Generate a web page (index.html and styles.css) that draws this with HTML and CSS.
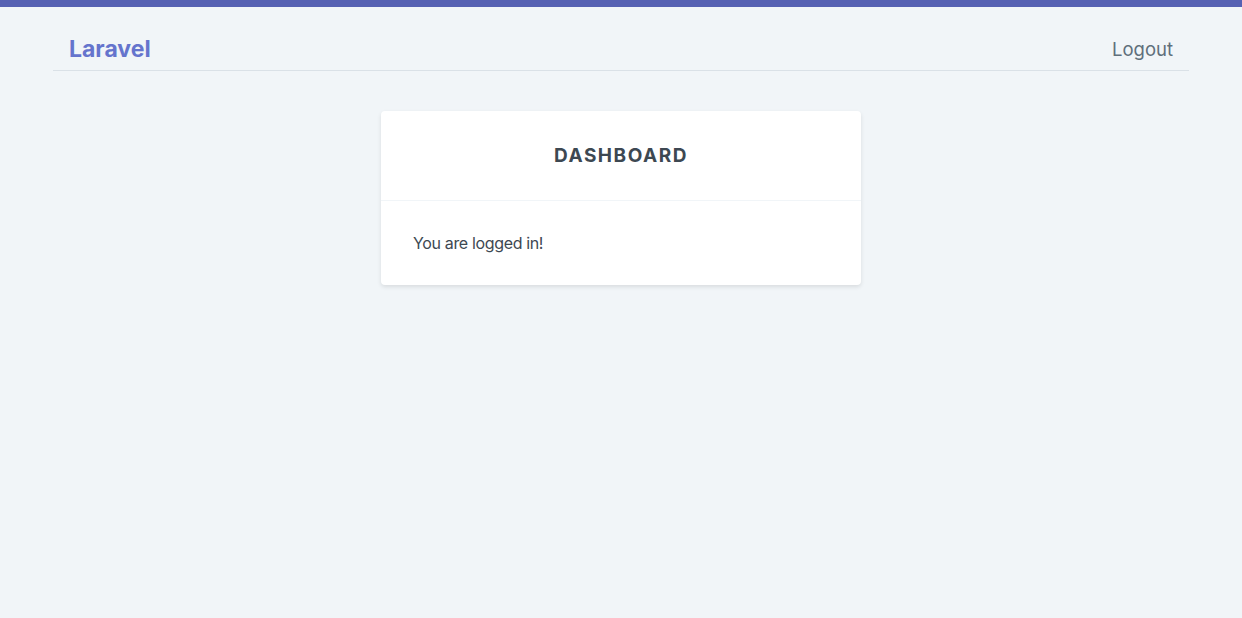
FILE: index.html
```html
<!DOCTYPE html>
<html lang="en">
<head>
<meta charset="utf-8">
<title>Laravel</title>
<link rel="stylesheet" href="styles.css">
</head>
<body>
<div class="topbar"></div>
<div class="container">
  <nav class="nav">
    <a class="brand" href="#">Laravel</a>
    <a class="logout" href="#">Logout</a>
  </nav>
  <main class="main">
    <div class="card">
      <div class="card-header">Dashboard</div>
      <div class="card-body">You are logged in!</div>
    </div>
  </main>
</div>
</body>
</html>
```
FILE: styles.css
```css
* { box-sizing: border-box; }
html, body { margin: 0; padding: 0; }
body {
  background: #f1f5f8;
  font-family: Inter, "Noto Sans", "Liberation Sans", sans-serif;
  color: #3d4852;
  min-height: 618px;
}
.topbar {
  height: 7px;
  background: #5661b3;
}
.container {
  width: 1136px;
  margin: 0 auto;
}
.nav {
  display: flex;
  justify-content: space-between;
  align-items: center;
  padding: 28px 16px 7px;
  border-bottom: 1px solid #dae1e7;
}
.brand {
  font-size: 23px;
  line-height: 28px;
  font-weight: 700;
  color: #6574cd;
  text-decoration: none;
}
.logout {
  font-size: 18.5px;
  line-height: 28px;
  color: #606f7b;
  text-decoration: none;
}
.main {
  display: flex;
  justify-content: center;
  padding-top: 40px;
}
.card {
  width: 480px;
  background: #fff;
  border-radius: 4px;
  box-shadow: 0 2px 4px 0 rgba(0,0,0,0.10);
}
.card-header {
  padding: 32px;
  text-align: center;
  font-size: 19px;
  line-height: 25px;
  font-weight: 700;
  letter-spacing: 1.5px;
  text-transform: uppercase;
  color: #3d4852;
  border-bottom: 1px solid #f1f5f8;
}
.card-body {
  padding: 32px;
  font-size: 16px;
  line-height: 20px;
  letter-spacing: -0.35px;
  color: #3d4852;
}
```
